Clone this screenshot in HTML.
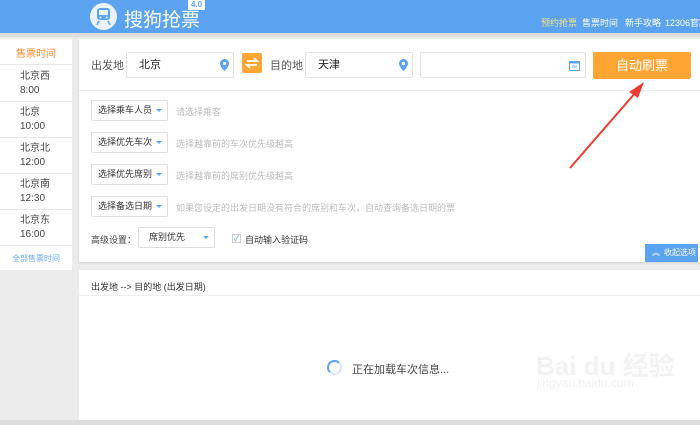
<!DOCTYPE html>
<html><head><meta charset="utf-8"><style>
*{margin:0;padding:0;box-sizing:border-box}
body{width:700px;height:425px;overflow:hidden;background:#ececec;font-family:"Liberation Sans","Noto Sans CJK SC",sans-serif;position:relative;font-size:10px;color:#333}
.a{position:absolute;white-space:nowrap}
.hdr{left:0;top:0;width:700px;height:33px;background:#5ba3f0}
.nav{top:16px;font-size:9px;color:#fff}
.side{left:0;top:39px;width:72px;height:231px;background:#fff}
.si{position:absolute;left:20px;font-size:10px;color:#444;line-height:14px}
.ln{position:absolute;left:0;width:72px;height:1px;background:#e8e8e8}
.panel{left:79px;top:39px;width:621px;height:223px;background:#fff;box-shadow:0 1px 2px #ccc}
.inp{position:absolute;height:26px;border:1px solid #e3e3e3;border-radius:2px;background:#fff;font-size:11px;line-height:24px;padding-left:12px;color:#222}
.sel{position:absolute;left:12px;width:77px;height:21px;border:1px solid #ddd;border-radius:2px;font-size:9px;line-height:19px;padding-left:6px;color:#333;white-space:nowrap}
.sel:after{content:"";position:absolute;right:5px;top:8px;border:3px solid transparent;border-top:3px solid #5ba3f0}
.hint{position:absolute;left:97px;font-size:9px;color:#bbb;white-space:nowrap}
.p2{left:79px;top:270px;width:621px;height:150px;background:#fff}
</style></head><body>
<div class="a hdr"></div>
<div class="a" style="left:90px;top:3px;width:27px;height:27px;border-radius:50%;background:#eaf3fd"></div>
<svg class="a" style="left:96px;top:8px" width="15" height="17" viewBox="0 0 15 17"><rect x="1" y="0" width="13" height="12" rx="3" fill="#5ba3f0"/><rect x="3" y="2" width="9" height="5" fill="#eaf3fd"/><circle cx="4.5" cy="9.5" r="1" fill="#eaf3fd"/><circle cx="10.5" cy="9.5" r="1" fill="#eaf3fd"/><path d="M3 13 L1 17 M12 13 L14 17" stroke="#5ba3f0" stroke-width="1.6"/></svg>
<div class="a" style="left:124px;top:5px;font-size:19px;color:#fff">搜狗抢票</div>
<div class="a" style="left:188px;top:0;width:17px;height:10px;background:#fff;color:#5ba3f0;font-size:8px;font-weight:bold;text-align:center;line-height:10px;border-radius:1px">4.0</div>
<div class="a nav" style="left:541px;color:#f2e38a">预约抢票</div>
<div class="a nav" style="left:582px">售票时间</div>
<div class="a nav" style="left:625px">新手攻略</div>
<div class="a nav" style="left:665px">12306官网</div>
<div class="a" style="left:0;top:33px;width:700px;height:4px;background:#ddd"></div>

<div class="a side">
<div style="position:absolute;left:0;width:72px;top:6px;text-align:center;color:#ff8a2a;font-size:10px">售票时间</div>
<div class="ln" style="top:25px"></div>
<div class="si" style="top:31px">北京西<br>8:00</div><div class="ln" style="top:62px"></div>
<div class="si" style="top:67px">北京<br>10:00</div><div class="ln" style="top:98px"></div>
<div class="si" style="top:103px">北京北<br>12:00</div><div class="ln" style="top:134px"></div>
<div class="si" style="top:139px">北京南<br>12:30</div><div class="ln" style="top:170px"></div>
<div class="si" style="top:175px">北京东<br>16:00</div><div class="ln" style="top:206px"></div>
<div style="position:absolute;left:0;width:72px;top:214px;text-align:center;color:#6aa8ee;font-size:8px">全部售票时间</div>
</div>

<div class="a panel">
<div class="a" style="left:12px;top:18px;font-size:11px;color:#555">出发地</div>
<div class="inp" style="left:47px;top:13px;width:108px">北京<svg style="position:absolute;right:4px;top:6px" width="9" height="12" viewBox="0 0 9 12"><path d="M4.5 0A4.5 4.5 0 0 0 0 4.5C0 8 4.5 12 4.5 12S9 8 9 4.5A4.5 4.5 0 0 0 4.5 0Z" fill="#5ba3f0"/><circle cx="4.5" cy="4.5" r="1.6" fill="#fff"/></svg></div>
<div class="a" style="left:163px;top:14px;width:20px;height:20px;background:#ffa534;border-radius:2px"><svg width="20" height="20" viewBox="0 0 20 20"><path d="M5 8H15L12 5M15 12H5L8 15" stroke="#fff" stroke-width="1.8" fill="none"/></svg></div>
<div class="a" style="left:191px;top:18px;font-size:11px;color:#555">目的地</div>
<div class="inp" style="left:226px;top:13px;width:108px">天津<svg style="position:absolute;right:4px;top:6px" width="9" height="12" viewBox="0 0 9 12"><path d="M4.5 0A4.5 4.5 0 0 0 0 4.5C0 8 4.5 12 4.5 12S9 8 9 4.5A4.5 4.5 0 0 0 4.5 0Z" fill="#5ba3f0"/><circle cx="4.5" cy="4.5" r="1.6" fill="#fff"/></svg></div>
<div class="inp" style="left:341px;top:13px;width:166px"><svg style="position:absolute;right:5px;top:7px" width="11" height="11" viewBox="0 0 11 11"><rect x="0.5" y="1.5" width="10" height="9" fill="none" stroke="#5ba3f0"/><rect x="0.5" y="1.5" width="10" height="2" fill="#5ba3f0"/><rect x="3" y="5" width="5" height="3" fill="#b9d8f8"/></svg></div>
<div class="a" style="left:514px;top:13px;width:98px;height:27px;background:#ffa534;border-radius:2px;color:#fff;font-size:13px;text-align:center;line-height:27px">自动刷票</div>
<div class="a" style="left:0;top:51px;width:621px;height:1px;background:#eee"></div>
<div class="sel" style="top:61px">选择乘车人员</div><div class="hint" style="top:66px">请选择乘客</div>
<div class="sel" style="top:93px">选择优先车次</div><div class="hint" style="top:98px">选择越靠前的车次优先级越高</div>
<div class="sel" style="top:125px">选择优先席别</div><div class="hint" style="top:130px">选择越靠前的席别优先级越高</div>
<div class="sel" style="top:157px">选择备选日期</div><div class="hint" style="top:162px">如果您设定的出发日期没有符合的席别和车次，自动查询备选日期的票</div>
<div class="a" style="left:12px;top:194px;font-size:9px;color:#444">高级设置：</div>
<div class="sel" style="left:59px;top:188px;width:77px;padding-left:10px">席别优先</div>
<div class="a" style="left:153px;top:195px;width:9px;height:9px;border:1px solid #ccc;font-size:8px;line-height:7px;color:#5ba3f0;text-align:center">✓</div>
<div class="a" style="left:166px;top:194px;font-size:9px;color:#333">自动输入验证码</div>
<div class="a" style="left:566px;top:205px;width:53px;height:18px;background:#5ba3f0;color:#fff;font-size:8px;line-height:18px;padding-left:19px">收起选项<span style="position:absolute;left:7px;top:0;font-size:8px">︽</span></div>
</div>

<div class="a p2">
<div class="a" style="left:12px;top:10px;font-size:9px;color:#333">出发地 --&gt; 目的地 (出发日期)</div>
<div class="a" style="left:0;top:25px;width:621px;height:1px;background:#eee"></div>
<div class="a" style="left:248px;top:90px;width:15px;height:15px;border-radius:50%;border:2px solid #d6e7fb;border-top-color:#5ba3f0;border-left-color:#5ba3f0"></div>
<div class="a" style="left:273px;top:91px;font-size:11px;color:#444">正在加载车次信息...</div>
<div class="a" style="left:457px;top:76px;font-size:26px;color:#f2f2f2;font-weight:bold">Bai du 经验</div>
<div class="a" style="left:458px;top:106px;font-size:12px;color:#f0f0f0">jingyan.baidu.com</div>
</div>
<div class="a" style="left:0;top:420px;width:700px;height:5px;background:#ddd"></div>
<svg class="a" style="left:0;top:0" width="700" height="425"><line x1="570" y1="168" x2="636" y2="92" stroke="#ee3b33" stroke-width="2"/><polygon points="644,82 629,92 638,98" fill="#ee3b33"/></svg>
</body></html>
